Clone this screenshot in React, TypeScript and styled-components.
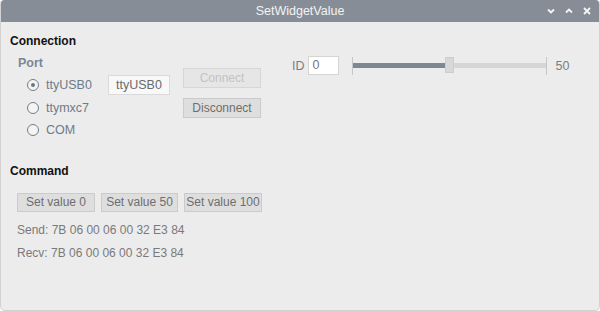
import React, { useState } from 'react'
import styled, { createGlobalStyle } from 'styled-components'

const GlobalStyle = createGlobalStyle`
  html, body {
    margin: 0;
    padding: 0;
    background: #ffffff;
  }
  * {
    box-sizing: border-box;
  }
`

const Window = styled.div`
  display: flex;
  flex-direction: column;
  width: 600px;
  height: 311px;
  background: #ececec;
  border: 1px solid #d2d2d2;
  border-top: none;
  border-radius: 4px 4px 5px 5px;
  overflow: hidden;
  font-family: 'Liberation Sans', Arial, sans-serif;
  font-size: 12px;
`

const TitleBar = styled.div`
  position: relative;
  display: flex;
  align-items: center;
  justify-content: center;
  height: 22px;
  margin: 0 -1px;
  background: #878d96;
  color: #f2f3f5;
  font-size: 12.5px;
  border-radius: 4px 4px 0 0;
`

const TitleButtons = styled.div`
  position: absolute;
  right: 9px;
  top: 0;
  height: 22px;
  display: flex;
  align-items: center;
  gap: 10px;
`

const Body = styled.div`
  flex: 1;
  padding: 0 9px;
`

const SectionTitle = styled.div<{ $top: number }>`
  margin-top: ${p => p.$top}px;
  height: 14px;
  line-height: 14px;
  font-weight: bold;
  color: #111;
`

const ConnectionRow = styled.div`
  display: flex;
  align-items: flex-start;
  margin-top: 8px;
`

const PortColumn = styled.div`
  display: flex;
  flex-direction: column;
  width: 90px;
  margin-left: 8px;
`

const GroupLabel = styled.div`
  height: 18px;
  line-height: 14px;
  font-weight: bold;
  color: #7b8796;
  font-size: 12.5px;
`

const RadioRow = styled.label`
  display: flex;
  align-items: center;
  gap: 7px;
  height: 22.5px;
  padding-left: 9px;
  color: #6f7a87;
  font-size: 12.5px;
`

const RadioCircle = styled.span<{ $checked: boolean }>`
  position: relative;
  width: 12px;
  height: 12px;
  border: 1px solid #747e8a;
  border-radius: 50%;
  background: #f4f4f4;

  &::after {
    content: '';
    display: ${p => (p.$checked ? 'block' : 'none')};
    position: absolute;
    left: 3px;
    top: 3px;
    width: 4px;
    height: 4px;
    border-radius: 50%;
    background: #6c7682;
  }
`

const TextBox = styled.div`
  width: 62px;
  height: 20px;
  margin-top: 19px;
  border: 1px solid #dadada;
  background: #f8f8f8;
  color: #6a6a6a;
  font-size: 12.5px;
  line-height: 18px;
  text-align: center;
`

const ButtonColumn = styled.div`
  display: flex;
  flex-direction: column;
  gap: 10px;
  margin-top: 12px;
  margin-left: 13px;
`

const Button = styled.button<{ $width?: number; $height?: number }>`
  width: ${p => p.$width ?? 78}px;
  height: ${p => p.$height ?? 20}px;
  padding: 0;
  border: 1px solid #cbcbcb;
  background: #dedede;
  color: #6e6e6e;
  font-family: inherit;
  font-size: 12px;
  line-height: 17px;
  white-space: nowrap;
  overflow: hidden;

  &:disabled {
    background: #e6e6e6;
    border-color: #d6d6d6;
    color: #c3c3c3;
  }
`

const IdGroup = styled.div`
  display: flex;
  align-items: center;
  margin-left: 31px;
  height: 19px;
`

const IdLabel = styled.span`
  color: #7c7c7c;
  font-size: 12.5px;
  margin-right: 3px;
`

const IdInput = styled.div`
  width: 31px;
  height: 19px;
  border: 1px solid #d4d4d4;
  background: #ffffff;
  color: #777;
  padding-left: 4px;
  line-height: 17px;
  font-size: 12.5px;
`

const Slider = styled.div`
  position: relative;
  display: flex;
  align-items: center;
  width: 195px;
  height: 19px;
  margin-left: 13px;
`

const Tick = styled.div`
  width: 1px;
  height: 18px;
  background: #c6c6c6;
`

const Groove = styled.div`
  position: relative;
  flex: 1;
  height: 5px;
  background: #d6d6d6;
`

const Filled = styled.div`
  height: 100%;
  background: #7d8891;
`

const Handle = styled.div`
  position: absolute;
  top: -6px;
  width: 9px;
  height: 16px;
  background: #d8d8d8;
  border: 1px solid #cdcdcd;
`

const ValueText = styled.span`
  margin-left: 9px;
  color: #7c7c7c;
  font-size: 12.5px;
`

const CommandRow = styled.div`
  display: flex;
  gap: 6px;
  margin-top: 15px;
  padding-left: 7px;
`

const InfoLine = styled.div<{ $top: number }>`
  margin-top: ${p => p.$top}px;
  padding-left: 7px;
  height: 14px;
  line-height: 14px;
  color: #7a7a7a;
  font-size: 12px;
`

function Chevron({ up }: { up?: boolean }) {
  return (
    <svg width='8' height='8' viewBox='0 0 8 8'>
      <path
        d={up ? 'M1 5.5 L4 2.5 L7 5.5' : 'M1 2.5 L4 5.5 L7 2.5'}
        fill='none'
        stroke='#f4f5f7'
        strokeWidth='1.8'
      />
    </svg>
  )
}

function CloseIcon() {
  return (
    <svg width='8' height='8' viewBox='0 0 8 8'>
      <path d='M1 1 L7 7 M7 1 L1 7' stroke='#f4f5f7' strokeWidth='1.8' />
    </svg>
  )
}

const ports = ['ttyUSB0', 'ttymxc7', 'COM']

export default function App() {
  const [port, setPort] = useState('ttyUSB0')
  const value = 50
  // slider range 0..100 mapped onto groove minus handle width
  const ratio = value / 100 * 0.955

  return (
    <>
      <GlobalStyle />
      <Window>
        <TitleBar>
          SetWidgetValue
          <TitleButtons>
            <Chevron />
            <Chevron up />
            <CloseIcon />
          </TitleButtons>
        </TitleBar>
        <Body>
          <SectionTitle $top={12}>Connection</SectionTitle>
          <ConnectionRow>
            <PortColumn>
              <GroupLabel>Port</GroupLabel>
              {ports.map(p => (
                <RadioRow key={p} onClick={() => setPort(p)}>
                  <RadioCircle $checked={port === p} />
                  {p}
                </RadioRow>
              ))}
            </PortColumn>
            <TextBox>ttyUSB0</TextBox>
            <ButtonColumn>
              <Button disabled>Connect</Button>
              <Button>Disconnect</Button>
            </ButtonColumn>
            <IdGroup>
              <IdLabel>ID</IdLabel>
              <IdInput>0</IdInput>
              <Slider>
                <Tick />
                <Groove>
                  <Filled style={{ width: `${ratio * 100}%` }} />
                  <Handle style={{ left: `${ratio * 100}%` }} />
                </Groove>
                <Tick />
              </Slider>
              <ValueText>{value}</ValueText>
            </IdGroup>
          </ConnectionRow>
          <SectionTitle $top={22}>Command</SectionTitle>
          <CommandRow>
            <Button $width={78} $height={19}>Set value 0</Button>
            <Button $width={77} $height={19}>Set value 50</Button>
            <Button $width={78} $height={19}>Set value 100</Button>
          </CommandRow>
          <InfoLine $top={11}>Send: 7B 06 00 06 00 32 E3 84</InfoLine>
          <InfoLine $top={9}>Recv: 7B 06 00 06 00 32 E3 84</InfoLine>
        </Body>
      </Window>
    </>
  )
}
